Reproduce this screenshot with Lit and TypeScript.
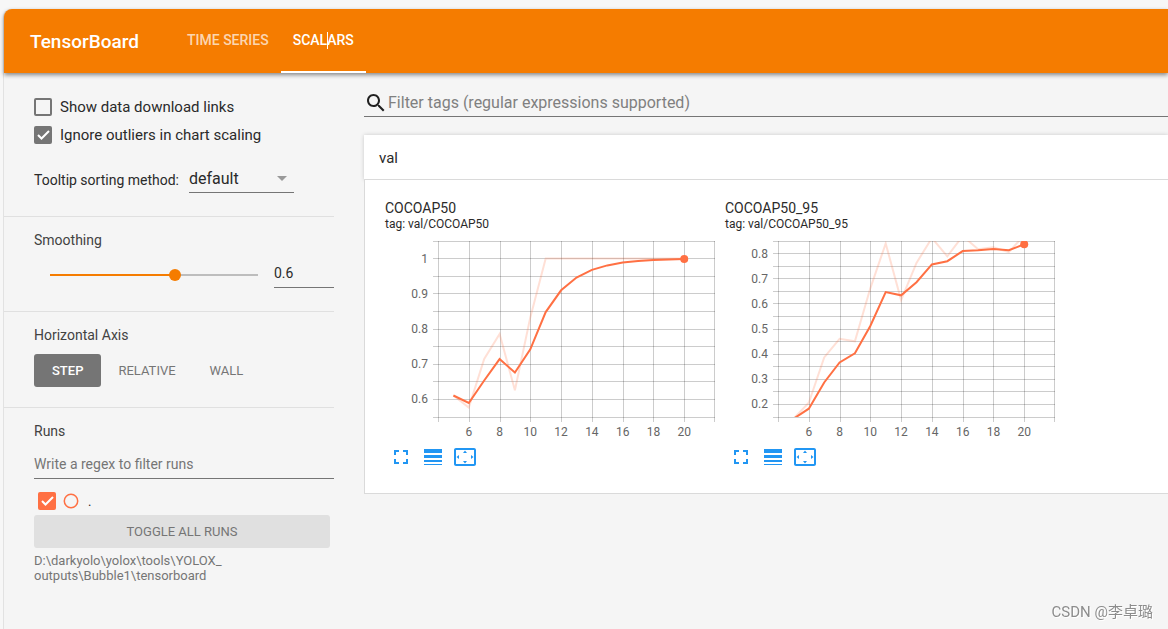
import { LitElement, html, svg, css } from "lit";
import { customElement, property, state } from "lit/decorators.js";

const FIRST_STEP = 5;
const X_MIN = 4;
const X_MAX = 22;

interface Series {
  name: string;
  tag: string;
  min: number;
  max: number;
  labels: number[];
  values: number[];
}

const SERIES: Series[] = [
  {
    name: "COCOAP50",
    tag: "val/COCOAP50",
    min: 0.55,
    max: 1.05,
    labels: [0.6, 0.7, 0.8, 0.9, 1],
    values: [0.611, 0.577, 0.715, 0.786, 0.626, 0.833, 1, 1, 1, 1, 1, 1, 1, 1, 1, 1],
  },
  {
    name: "COCOAP50_95",
    tag: "val/COCOAP50_95",
    min: 0.15,
    max: 0.85,
    labels: [0.2, 0.3, 0.4, 0.5, 0.6, 0.7, 0.8],
    values: [
      0.143, 0.207, 0.387, 0.461, 0.451, 0.662, 0.84, 0.615, 0.763, 0.862, 0.789, 0.87, 0.8175,
      0.8255, 0.8055, 0.873,
    ],
  },
];

/** Debiased exponential moving average. */
function smooth(values: number[], weight: number): number[] {
  let last = 0;
  return values.map((v, i) => {
    last = last * weight + (1 - weight) * v;
    return last / (1 - Math.pow(weight, i + 1));
  });
}

@customElement("scalar-chart")
export class ScalarChart extends LitElement {
  @property({ attribute: false }) series!: Series;
  @property({ type: Number }) smoothing = 0.6;

  static styles = css`
    :host {
      display: block;
      width: 330px;
    }
    .name {
      margin: 0;
      font-size: 14px;
      font-weight: 400;
      line-height: 16px;
    }
    .tag {
      font-size: 12px;
      line-height: 16px;
    }
    .plot {
      display: block;
      margin-top: 9px;
      width: 330px;
      height: 200px;
    }
    .grid {
      stroke: #000;
      stroke-opacity: 0.2;
      stroke-width: 1;
    }
    .label {
      font-size: 12px;
      fill: #666;
    }
    .line {
      fill: none;
      stroke: #ff7043;
      stroke-width: 2;
    }
    .raw {
      stroke-opacity: 0.22;
    }
    .dot {
      fill: #ff7043;
    }
    .actions {
      display: flex;
      gap: 8px;
      margin-top: 4px;
      padding-left: 4px;
    }
    .action {
      width: 24px;
      height: 24px;
      padding: 0;
      border: 0;
      background: none;
      cursor: pointer;
    }
    .action svg {
      display: block;
      fill: #2196f3;
    }
  `;

  render() {
    const { name, tag, min, max, labels, values } = this.series;
    const left = 53;
    const width = 277;
    const height = 176;
    const x = (s: number) => left + ((s - X_MIN) / (X_MAX - X_MIN)) * width;
    const y = (v: number) => ((max - v) / (max - min)) * height;
    const path = (vs: number[]) =>
      vs.map((v, i) => `${x(i + FIRST_STEP).toFixed(1)},${y(v).toFixed(1)}`).join(" ");
    const smoothed = smooth(values, this.smoothing);
    const rows = Math.round((max - min) / 0.05);
    const lastIndex = values.length - 1;
    const clipId = `clip-${name}`;

    return html`
      <h3 class="name">${name}</h3>
      <div class="tag">tag: ${tag}</div>
      <svg class="plot" viewBox="0 0 330 200" role="img" aria-label=${name}>
        <clipPath id=${clipId}><rect x=${left} y="0" width=${width} height=${height} /></clipPath>
        ${Array.from({ length: rows + 1 }, (_, i) => {
          const gy = Math.min(Math.floor((i * height) / rows), height) + 0.5;
          return svg`<line class="grid" x1=${left - 5} x2=${left + width} y1=${gy} y2=${gy} />`;
        })}
        ${Array.from({ length: 10 }, (_, i) => {
          const gx = Math.min(Math.round(x(X_MIN + i * 2)), 329) + 0.5;
          return svg`<line class="grid" x1=${gx} x2=${gx} y1="0" y2=${height + 5} />`;
        })}
        ${labels.map(
          (v) => svg`<text class="label" x="43" y=${y(v) + 4} text-anchor="end">${v}</text>`,
        )}
        ${[6, 8, 10, 12, 14, 16, 18, 20].map(
          (s) => svg`<text class="label" x=${x(s)} y="195" text-anchor="middle">${s}</text>`,
        )}
        <g clip-path="url(#${clipId})">
          <polyline class="line raw" points=${path(values)} />
          <polyline class="line" points=${path(smoothed)} />
        </g>
        <circle class="dot" cx=${x(FIRST_STEP + lastIndex)} cy=${y(smoothed[lastIndex])} r="4" />
      </svg>
      <div class="actions">
        <button class="action" aria-label="Toggle full size">
          <svg width="24" height="24" viewBox="0 0 24 24">
            <path d="M7 14H5v5h5v-2H7v-3zm-2-4h2V7h3V5H5v5zm12 7h-3v2h5v-5h-2v3zM14 5v2h3v3h2V5h-5z" />
          </svg>
        </button>
        <button class="action" aria-label="Toggle y-axis log scale">
          <svg width="24" height="24" viewBox="0 0 24 24">
            <path d="M3 17h18v-2H3v2zm0 3h18v-1H3v1zm0-7h18v-3H3v3zm0-9v4h18V4H3z" />
          </svg>
        </button>
        <button class="action" aria-label="Fit domain to data">
          <svg width="24" height="24" viewBox="0 0 24 24">
            <path
              d="M12 5.500L10 8h4l-2-2.500zM18 10v4l2.500-2L18 10zM6 10l-2.500 2L6 14v-4zM14 16h-4l2 2.500 2-2.500zM21 3H3c-1.100 0-2 .9-2 2v14c0 1.100.9 2 2 2h18c1.100 0 2-.9 2-2V5c0-1.100-.9-2-2-2zM21 19.010H3V4.990h18v14.020z"
            />
          </svg>
        </button>
      </div>
    `;
  }
}

@customElement("app-root")
export class AppRoot extends LitElement {
  @state() private smoothing = 0.6;
  @state() private axis = "STEP";

  static styles = css`
    :host {
      display: flow-root;
      box-sizing: border-box;
      min-height: 100vh;
      padding: 9px 0 0 3px;
      background: #f7f7f7;
      color: #2a2a2a;
      font-family: Roboto, "Noto Sans CJK SC", sans-serif;
      font-size: 14px;
      overflow: hidden;
    }
    * {
      box-sizing: border-box;
    }
    button,
    input,
    select {
      font-family: inherit;
      color: inherit;
      margin: 0;
      outline: none;
    }
    .frame {
      min-height: calc(100vh - 9px);
      border-left: 1px solid #e2e2e2;
      border-top-left-radius: 8px;
      background: #f5f5f5;
    }
    .toolbar {
      display: flex;
      align-items: center;
      position: relative;
      height: 64px;
      padding-left: 26px;
      border-top-left-radius: 8px;
      background: #f57c00;
      color: #fff;
      box-shadow: 0 2px 4px rgba(0, 0, 0, 0.45);
    }
    .brand {
      margin: 0;
      width: 145px;
      font-size: 19px;
      font-weight: 500;
    }
    .tabs {
      display: flex;
      align-self: stretch;
    }
    .tab {
      position: relative;
      display: flex;
      align-items: center;
      padding: 0 12px 2px;
      color: rgba(255, 255, 255, 0.7);
      font-size: 14px;
      font-weight: 500;
      text-decoration: none;
    }
    .tab.active {
      color: #fff;
      box-shadow: inset 0 -2px #fff;
    }
    .caret {
      position: absolute;
      left: 46px;
      top: 23px;
      width: 1px;
      height: 17px;
      background: #fff;
    }
    .layout {
      display: grid;
      grid-template-columns: 330px minmax(0, 1fr);
      gap: 30px;
    }
    .section {
      padding: 13px 0 23px 30px;
      border-bottom: 1px solid #e0e0e0;
    }
    .section.first {
      padding-top: 25px;
    }
    .section.axis {
      padding-bottom: 20px;
    }
    .section.runs {
      border-bottom: 0;
      padding-bottom: 0;
    }
    .title {
      margin: 0;
      font-size: 14px;
      font-weight: 400;
      line-height: 20px;
      color: #424242;
    }
    .check {
      display: flex;
      align-items: center;
      gap: 8px;
      height: 18px;
      font-size: 15px;
    }
    .check + .check {
      margin-top: 10px;
    }
    .box {
      appearance: none;
      flex: none;
      width: 18px;
      height: 18px;
      border: 2px solid #757575;
      border-radius: 2px;
    }
    .box:checked {
      border: 0;
      background: #757575
        url("data:image/svg+xml,%3Csvg xmlns='http://www.w3.org/2000/svg' viewBox='0 0 18 18'%3E%3Cpath d='M4 9l3.500 3.500L15 5' fill='none' stroke='white' stroke-width='2'/%3E%3C/svg%3E");
    }
    .box.run:checked {
      background-color: #ff7043;
    }
    .sorting {
      display: flex;
      align-items: center;
      gap: 10px;
      margin-top: 21px;
    }
    .sorting label {
      padding-top: 2px;
    }
    .select {
      display: flex;
      align-items: center;
      width: 105px;
      border-bottom: 1px solid #757575;
    }
    .select select {
      appearance: none;
      flex: 1;
      min-width: 0;
      height: 27px;
      padding: 0;
      border: 0;
      background: none;
      font-size: 16px;
    }
    .arrow {
      flex: none;
      margin-right: 7px;
      fill: #999;
    }
    .smooth {
      display: flex;
      align-items: flex-start;
      justify-content: space-between;
      margin-top: 14px;
      padding-left: 10px;
    }
    .slider {
      appearance: none;
      width: 220px;
      height: 22px;
      background: none;
    }
    .slider::-webkit-slider-runnable-track {
      height: 2px;
      background: linear-gradient(
        to right,
        transparent 6px,
        #f57c00 6px,
        #f57c00 calc(6px + (100% - 12px) * var(--value)),
        #bdbdbd calc(6px + (100% - 12px) * var(--value)),
        #bdbdbd calc(100% - 6px),
        transparent calc(100% - 6px)
      );
    }
    .slider::-webkit-slider-thumb {
      appearance: none;
      width: 12px;
      height: 12px;
      margin-top: -5px;
      border-radius: 50%;
      background: #f57c00;
    }
    .field {
      padding: 0;
      border: 0;
      border-bottom: 1px solid #757575;
      border-radius: 0;
      background: none;
      font-size: 14px;
    }
    .field::placeholder {
      color: #757575;
    }
    .number {
      appearance: textfield;
      width: 60px;
      height: 24px;
      padding-bottom: 5px;
    }
    .number::-webkit-inner-spin-button {
      appearance: none;
    }
    .buttons {
      display: flex;
      margin-top: 9px;
    }
    .button {
      height: 33px;
      padding: 0 17px;
      border: 0;
      border-radius: 3px;
      background: none;
      color: #757575;
      font-size: 13px;
    }
    .button.selected {
      padding: 0 18px;
      background: #757575;
      color: #fff;
      font-weight: 500;
    }
    .regex {
      display: block;
      width: 100%;
      height: 29px;
      margin-top: 9px;
    }
    .run-row {
      display: flex;
      align-items: center;
      gap: 7px;
      height: 18px;
      margin-top: 13px;
      padding-left: 4px;
      font-size: 13px;
    }
    .ring {
      width: 16px;
      height: 16px;
      padding: 0;
      border: 0;
      background: none;
    }
    .ring svg {
      display: block;
      fill: none;
      stroke: #ff7043;
      stroke-width: 1.5;
    }
    .run-name {
      padding-left: 2px;
    }
    .toggle {
      display: block;
      width: calc(100% - 4px);
      margin-top: 5px;
      background: #e0e0e0;
    }
    .logdir {
      max-width: 200px;
      margin-top: 5px;
      color: #757575;
      font-size: 13px;
      line-height: 15px;
    }
    .filter {
      display: flex;
      align-items: center;
      height: 28px;
      margin-top: 16px;
      border-bottom: 1px solid #757575;
    }
    .filter input {
      flex: 1;
      height: 26px;
      padding: 0;
      border: 0;
      background: none;
      font-size: 16px;
    }
    .filter input::placeholder {
      color: #808080;
    }
    .card {
      margin-top: 18px;
    }
    .card-title {
      display: block;
      width: 100%;
      height: 45px;
      padding: 2px 15px 0;
      border: 0;
      border-bottom: 1px solid #dadada;
      background: #fff;
      box-shadow: 0 0 4px rgba(0, 0, 0, 0.18);
      font-size: 15px;
      text-align: left;
    }
    .charts {
      position: relative;
      display: flex;
      flex-wrap: wrap;
      gap: 10px;
      padding: 20px 20px 24px;
      border: solid #dadada;
      border-width: 0 0 1px 1px;
      background: #fff;
    }
    .watermark {
      position: fixed;
      right: 15px;
      bottom: 7px;
      color: #8c8c8c;
      font-size: 15px;
      line-height: 20px;
      text-shadow: 1px 1px #fff;
    }
  `;

  private setSmoothing(e: Event) {
    this.smoothing = Number((e.target as HTMLInputElement).value);
  }

  render() {
    return html`
      <div class="frame">
        <header class="toolbar">
          <h1 class="brand">TensorBoard</h1>
          <nav class="tabs">
            <a class="tab" href="#timeseries">TIME SERIES</a>
            <a class="tab active" href="#scalars">SCALARS<span class="caret"></span></a>
          </nav>
        </header>
        <div class="layout">
          <aside>
            <section class="section first">
              <label class="check"><input class="box" type="checkbox" />Show data download links</label>
              <label class="check">
                <input class="box" type="checkbox" checked />Ignore outliers in chart scaling
              </label>
              <div class="sorting">
                <label for="sort">Tooltip sorting method:</label>
                <div class="select">
                  <select id="sort">
                    <option>default</option>
                    <option>descending</option>
                    <option>ascending</option>
                    <option>nearest</option>
                  </select>
                  <svg class="arrow" width="10" height="5" viewBox="0 0 10 5"><path d="M0 0h10L5 5z" /></svg>
                </div>
              </div>
            </section>
            <section class="section">
              <h2 class="title" id="smoothing">Smoothing</h2>
              <div class="smooth">
                <input
                  class="slider"
                  type="range"
                  min="0"
                  max="1"
                  step="0.001"
                  aria-labelledby="smoothing"
                  style="--value: ${this.smoothing}"
                  .value=${String(this.smoothing)}
                  @input=${this.setSmoothing}
                />
                <input
                  class="field number"
                  type="number"
                  min="0"
                  max="1"
                  step="0.001"
                  aria-labelledby="smoothing"
                  .value=${String(this.smoothing)}
                  @change=${this.setSmoothing}
                />
              </div>
            </section>
            <section class="section axis">
              <h2 class="title">Horizontal Axis</h2>
              <div class="buttons">
                ${["STEP", "RELATIVE", "WALL"].map(
                  (a) => html`<button
                    class="button ${a === this.axis ? "selected" : ""}"
                    @click=${() => (this.axis = a)}
                  >
                    ${a}
                  </button>`,
                )}
              </div>
            </section>
            <section class="section runs">
              <h2 class="title">Runs</h2>
              <input
                class="field regex"
                type="text"
                placeholder="Write a regex to filter runs"
                aria-label="Write a regex to filter runs"
              />
              <div class="run-row">
                <input class="box run" id="run" type="checkbox" checked />
                <button class="ring" aria-label="Show only this run">
                  <svg width="16" height="16" viewBox="0 0 16 16"><circle cx="8" cy="8" r="6.700" /></svg>
                </button>
                <label class="run-name" for="run">.</label>
              </div>
              <button class="button toggle">TOGGLE ALL RUNS</button>
              <div class="logdir">D:\\darkyolo\\yolox\\tools\\YOLOX_<wbr />outputs\\Bubble1\\tensorboard</div>
            </section>
          </aside>
          <main>
            <div class="filter">
              <svg width="24" height="24" viewBox="0 0 24 24" fill="#212121">
                <path
                  d="M15.500 14h-.79l-.28-.27C15.410 12.590 16 11.110 16 9.500 16 5.910 13.090 3 9.500 3S3 5.910 3 9.500 5.910 16 9.500 16c1.610 0 3.090-.59 4.230-1.570l.27.28v.79l5 4.990L20.490 19l-4.990-5zm-6 0C7.010 14 5 11.990 5 9.500S7.010 5 9.500 5 14 7.010 14 9.500 11.990 14 9.500 14z"
                />
              </svg>
              <input
                type="text"
                placeholder="Filter tags (regular expressions supported)"
                aria-label="Filter tags"
              />
            </div>
            <section class="card">
              <button class="card-title">val</button>
              <div class="charts">
                ${SERIES.map(
                  (s) => html`<scalar-chart .series=${s} .smoothing=${this.smoothing}></scalar-chart>`,
                )}
              </div>
            </section>
          </main>
        </div>
      </div>
      <div class="watermark">CSDN @李卓璐</div>
    `;
  }
}
